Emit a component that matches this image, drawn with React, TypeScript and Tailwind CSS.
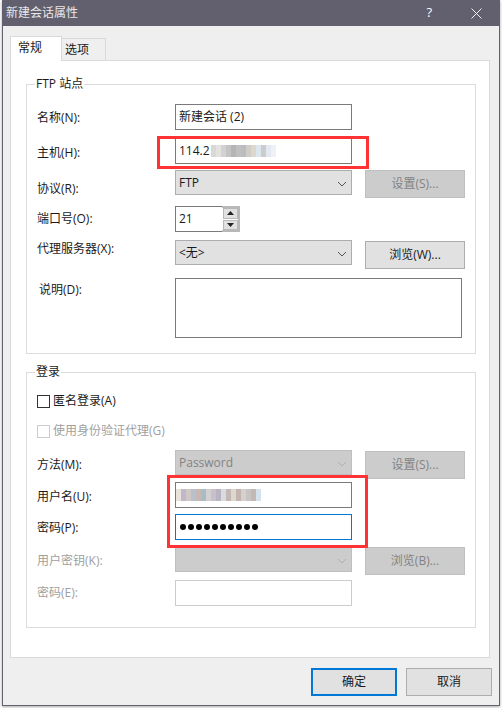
import { twMerge } from "tailwind-merge";

const FONT = "font-['Open_Sans','Noto_Sans_CJK_SC',sans-serif]";

function Chevron({ disabled }: { disabled?: boolean }) {
  return (
    <svg width="10" height="6" viewBox="0 0 10 6" fill="none" className="absolute right-[4px] top-[10px]">
      <path d="M1 1l4 4 4-4" stroke={disabled ? "#b0b0b0" : "#555555"} strokeWidth="1" />
    </svg>
  );
}

function Label({ children, className = "" }: { children: React.ReactNode; className?: string }) {
  return <div className={`w-[138px] shrink-0 text-[12px] leading-[16px] ${className}`}>{children}</div>;
}

function Input({ children, className = "" }: { children?: React.ReactNode; className?: string }) {
  return (
    <div className={twMerge("w-[177px] h-[26px] border border-[#7a7a7a] bg-white flex items-center pl-[3px] text-[12px] leading-[16px]", className)}>
      {children}
    </div>
  );
}

function Select({ children, disabled, className = "" }: { children?: React.ReactNode; disabled?: boolean; className?: string }) {
  return (
    <div
      className={`relative w-[177px] h-[25px] border pl-[3px] pr-[20px] flex items-center text-[12px] ${
        disabled ? "bg-[#cccccc] border-[#bfbfbf] text-[#838383]" : "bg-[#e1e1e1] border-[#adadad]"
      } ${className}`}
    >
      {children}
      <Chevron disabled={disabled} />
    </div>
  );
}

function Btn({ children, disabled, className = "" }: { children: React.ReactNode; disabled?: boolean; className?: string }) {
  return (
    <div
      className={`w-[100px] h-[28px] ml-[13px] border flex items-center justify-center text-[12px] ${
        disabled ? "bg-[#cccccc] border-[#bfbfbf] text-[#838383]" : "bg-[#e1e1e1] border-[#adadad]"
      } ${className}`}
    >
      {children}
    </div>
  );
}

function Mosaic({ colors, className = "" }: { colors: string[]; className?: string }) {
  return (
    <div className={`flex h-[12px] blur-[0.7px] ${className}`}>
      {colors.map((c, i) => (
        <div key={i} className="w-[5px] h-full" style={{ backgroundColor: c }} />
      ))}
    </div>
  );
}

function Check({ disabled, children }: { disabled?: boolean; children: React.ReactNode }) {
  return (
    <div className={`flex items-center h-[14px] gap-[3px] text-[12px] ${disabled ? "text-[#a0a0a0]" : ""}`}>
      <div className={`w-[13px] h-[13px] border bg-white ${disabled ? "border-[#cccccc]" : "border-[#333333]"}`} />
      {children}
    </div>
  );
}

function Dots() {
  return (
    <div className="flex gap-[2px] pl-[1px]">
      {Array.from({ length: 10 }).map((_, i) => (
        <div key={i} className="w-[6px] h-[6px] rounded-full bg-black" />
      ))}
    </div>
  );
}

export default function App() {
  return (
    <div className={`relative w-[502px] h-[708px] overflow-hidden bg-white text-[#1a1a1a] ${FONT}`}>
      <div className="ml-[2px] w-[498px] h-[706px] flex flex-col border-x border-b border-[#636170] bg-[#efefef] shadow-[0_1px_3px_rgba(0,0,0,0.35)]">
        <div className="h-[26px] shrink-0 bg-[#62606f] flex items-center pl-[3px] text-[12px] text-[#e8e8e8]">
          <span>新建会话属性</span>
          <span className="ml-auto text-[13px] text-white mr-[39px]">?</span>
          <svg width="11" height="11" viewBox="0 0 11 11" className="mr-[17px]">
            <path d="M0.5 0.5l10 10M10.5 0.5l-10 10" stroke="#f0f0f0" strokeWidth="1" />
          </svg>
        </div>

        <div className="pt-[9px] pl-[7px] flex items-end h-[34px] shrink-0 text-[12px]">
          <div className="relative z-10 w-[52px] h-[25px] -mb-px border border-b-0 border-[#d9d9d9] bg-white pl-[7px] pt-[2px]">常规</div>
          <div className="w-[44px] h-[22px] border border-l-0 border-b-0 border-[#d9d9d9] pl-[3px] pt-[2px]">选项</div>
        </div>

        <div className="ml-[7px] w-[480px] h-[598px] shrink-0 border border-[#d9d9d9] bg-white pl-[15px]">
          <fieldset className="w-[450px] h-[278px] mt-[15px] border border-[#dcdcdc] pl-[10px]">
            <legend className="ml-[-2px] px-[1px] text-[12px] leading-[16px]">FTP 站点</legend>
            <div className="flex h-[26px] mt-[12px]">
              <Label className="pt-[6px]">名称(N):</Label>
              <Input>新建会话 (2)</Input>
            </div>
            <div className="flex h-[26px] mt-[8px]">
              <Label className="pt-[7px]">主机(H):</Label>
              <Input>
                <span>114.2</span>
                <Mosaic
                  colors={["#d8d8d4", "#e4e2de", "#d2d2d2", "#c4c4c4", "#b5b5b5", "#c0c0c0", "#bcbcbc", "#d0cdc8", "#ded8cc", "#dbe6ee", "#cccccc", "#e4e8f0", "#eef2f6"]}
                  className="ml-[1px]"
                />
              </Input>
            </div>
            <div className="flex h-[28px] mt-[6px]">
              <Label className="pt-[11px]">协议(R):</Label>
              <Select>FTP</Select>
              <Btn disabled>设置(S)...</Btn>
            </div>
            <div className="flex h-[26px] mt-[8px]">
              <Label className="pt-[5px]">端口号(O):</Label>
              <Input className="w-[47px] border-r-0">21</Input>
              <div className="w-[18px] h-[26px] border-2 border-l-0 border-[#b8b8b8] flex flex-col gap-px bg-white pl-px">
                <div className="flex-1 bg-[#e1e1e1] border border-[#b8b8b8] flex items-center justify-center">
                  <svg width="7" height="4" viewBox="0 0 7 4"><path d="M3.5 0L7 4H0z" fill="#222222" /></svg>
                </div>
                <div className="flex-1 bg-[#e1e1e1] border border-[#b8b8b8] flex items-center justify-center">
                  <svg width="7" height="4" viewBox="0 0 7 4"><path d="M0 0h7L3.5 4z" fill="#222222" /></svg>
                </div>
              </div>
            </div>
            <div className="flex h-[29px] mt-[8px]">
              <Label className="pt-[1px]">代理服务器(X):</Label>
              <Select>&lt;无&gt;</Select>
              <Btn className="mt-[1px]">浏览(W)...</Btn>
            </div>
            <div className="flex h-[60px] mt-[9px]">
              <Label className="pt-[4px] pl-[2px]">说明(D):</Label>
              <div className="w-[287px] h-[60px] border border-[#7a7a7a] bg-white" />
            </div>
          </fieldset>

          <fieldset className="w-[450px] h-[264px] mt-[10px] border border-[#dcdcdc] pl-[10px]">
            <legend className="ml-[-2px] px-[1px] text-[12px] leading-[16px]">登录</legend>
            <div className="mt-[14px]">
              <Check>匿名登录(A)</Check>
            </div>
            <div className="mt-[16px]">
              <Check disabled>使用身份验证代理(G)</Check>
            </div>
            <div className="flex h-[29px] mt-[12px]">
              <Label className="pt-[7px]">方法(M):</Label>
              <Select disabled>Password</Select>
              <Btn disabled className="mt-[1px]">设置(S)...</Btn>
            </div>
            <div className="flex h-[26px] mt-[3px]">
              <Label className="pt-[7px]">用户名(U):</Label>
              <Input className="pl-0">
                <Mosaic colors={["#e8e4dc", "#bfb8cc", "#cfc8c4", "#b8c0cc", "#c8b8b4", "#a8bcc8", "#d4d0d0", "#c8c0cc", "#b8b4c0", "#d8dce0", "#c4b8b4", "#dcd8d0", "#c4b4b0", "#d4d0cc", "#c8c4c4", "#c4b8b4", "#d4e2ee"]} />
              </Input>
            </div>
            <div className="flex h-[26px] mt-[6px]">
              <Label className="pt-[6px]">密码(P):</Label>
              <Input className="border-[#0078d7]"><Dots /></Input>
            </div>
            <div className="flex h-[28px] mt-[7px] text-[#a0a0a0]">
              <Label className="pt-[6px]">用户密钥(K):</Label>
              <Select disabled />
              <Btn disabled>浏览(B)...</Btn>
            </div>
            <div className="flex h-[26px] mt-[5px] text-[#a0a0a0]">
              <Label className="pt-[5px]">密码(E):</Label>
              <Input className="border-[#cccccc]" />
            </div>
          </fieldset>
        </div>

        <div className="flex justify-end gap-[9px] mt-[10px] pr-[7px] text-[12px]">
          <div className="w-[86px] h-[28px] border-2 border-[#0078d7] bg-[#e1e1e1] flex items-center justify-center">确定</div>
          <div className="w-[86px] h-[28px] border border-[#adadad] bg-[#e1e1e1] flex items-center justify-center">取消</div>
        </div>
      </div>

      <div className="absolute left-[157px] top-[136px] w-[212px] h-[33px] border-[3px] border-[#ff3333]" />
      <div className="absolute left-[167px] top-[475px] w-[201px] h-[73px] border-[3px] border-[#ff3333]" />
    </div>
  );
}
